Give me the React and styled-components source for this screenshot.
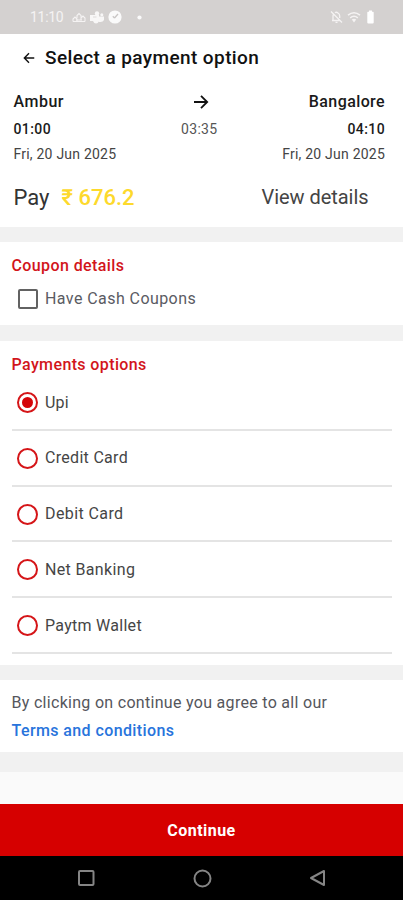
import React from "react";
import styled, { createGlobalStyle } from "styled-components";

const GlobalStyle = createGlobalStyle`
  *, *::before, *::after { box-sizing: border-box; }
  body { margin: 0; background: #fff; font-family: Roboto, sans-serif; }
  svg { display: block; flex: none; }
`;

const Screen = styled.div`
  width: 403px;
  height: 900px;
  display: flex;
  flex-direction: column;
  overflow: hidden;
  background: #fafafa;
`;

const StatusBar = styled.header`
  height: 34px;
  flex: none;
  display: flex;
  align-items: center;
  padding: 0 28px 0 30px;
  background: #d4d1d0;
  color: #f8f7f7;
`;

const StatusIcons = styled.div`
  display: flex;
  align-items: center;
  gap: ${(p) => p.$gap}px;
  margin-left: ${(p) => p.$left || "0"};
`;

const Label = styled.span`
  display: block;
  white-space: nowrap;
  font-size: ${(p) => p.$size || 16}px;
  line-height: ${(p) => p.$line || 24}px;
  font-weight: ${(p) => p.$weight || 400};
  letter-spacing: ${(p) => p.$track || 0}px;
  color: ${(p) => p.$color || "#222"};
`;

const TitleBar = styled.div`
  height: 48px;
  flex: none;
  display: flex;
  align-items: center;
  gap: 10px;
  padding-left: 23px;
  background: #fff;
`;

const Trip = styled.section`
  height: 145px;
  flex: none;
  padding: 6px 18px 0 13.5px;
  background: #fff;
`;

const TripRow = styled.div`
  height: ${(p) => p.$height}px;
  display: grid;
  grid-template-columns: 1fr 38px 1fr;
  align-items: center;
  justify-items: center;
  & > :first-child { justify-self: start; }
  & > :last-child { justify-self: end; }
  & > svg { margin-left: 4px; }
`;

const PayRow = styled.div`
  display: flex;
  align-items: center;
  height: 30px;
  margin-top: 18px;
  padding-right: 16.5px;
`;

const Amount = styled(Label)`
  margin-left: 12px;
  margin-right: auto;
`;

const DetailsLink = styled(Label)`
  margin-top: -2px;
`;

const Band = styled.div`
  height: ${(p) => p.$height}px;
  flex: none;
  background: #f1f1f1;
`;

const Section = styled.section`
  height: ${(p) => p.$height}px;
  flex: none;
  padding: ${(p) => p.$top}px 11px 0 11.5px;
  background: #fff;
`;

const CheckRow = styled.label`
  display: flex;
  align-items: center;
  gap: 7px;
  height: 24px;
  margin-top: 9px;
  padding-left: 6.5px;
`;

const Checkbox = styled.span`
  width: 20px;
  height: 20px;
  border: 2px solid #626262;
  border-radius: 2px;
`;

const Options = styled.div`
  margin-top: -2px;
`;

const Option = styled.label`
  display: flex;
  align-items: center;
  gap: 7px;
  height: 55.8px;
  padding: 1.3px 0 0 5.5px;
  border-bottom: 2px solid #e4e4e4;
`;

const Radio = styled.span`
  width: 21px;
  height: 21px;
  display: grid;
  place-items: center;
  border: 2px solid #d51518;
  border-radius: 50%;
  &::after {
    content: "";
    width: 11px;
    height: 11px;
    border-radius: 50%;
    background: ${(p) => (p.$checked ? "#d50509" : "transparent")};
  }
`;

const ContinueButton = styled.button`
  height: 52px;
  flex: none;
  margin-top: auto;
  padding: 2px 0 0;
  border: 0;
  display: grid;
  place-items: center;
  background: #d60000;
  font-family: inherit;
`;

const NavBar = styled.nav`
  height: 44px;
  flex: none;
  display: flex;
  align-items: center;
  justify-content: space-between;
  padding: 0 76px 0 77px;
  background: #000;
`;

function Arrow({ size, back, weight }) {
  return (
    <svg width={size} height={size} viewBox="0 0 16 16" fill="none" stroke="#111" strokeWidth={weight}>
      <path d={back ? "M15 8H2M8 1.8L1.8 8L8 14.2" : "M1 8H14M8 1.8L14.2 8L8 14.2"} />
    </svg>
  );
}

const methods = [
  ["Upi", 0.2],
  ["Credit Card", 0.3],
  ["Debit Card", 0.4],
  ["Net Banking", 0.35],
  ["Paytm Wallet", 0.28],
];

export default function App() {
  return (
    <>
      <GlobalStyle />
      <Screen>
        <StatusBar>
          <Label $size={14} $color="#f5f3f3" $track={-0.3}>11:10</Label>
          <StatusIcons $left="9px" $gap={4}>
            <svg width="14" height="12" viewBox="0 0 14 12" fill="none" stroke="#f5f3f3" strokeWidth="1.1">
              <path d="M1 10.5V8l2-2 2 2v2.5M5 7V4.5L7 2.5l2 2v5M9 7l2-2 2 2v3.5M1 10.5h12M4 9h6" />
            </svg>
            <svg width="14" height="13" viewBox="0 0 14 13" fill="#f8f7f7">
              <circle cx="7" cy="2.5" r="2.2" />
              <circle cx="11.8" cy="3.7" r="1.5" />
              <path d="M0 4h9v6H0zM8.8 5.5H14V9q-1 2-3.5 2H8.8zM3 10h6q-1 2.5-3 2.5T3 10z" />
              <path d="M3 6h3.5" stroke="#dedbda" />
            </svg>
            <svg width="14" height="14" viewBox="0 0 14 14">
              <circle cx="7" cy="7" r="6.6" fill="#fafafa" />
              <path d="M6.5 8L10 4M6.5 8L4.8 6.3" fill="none" stroke="#c9c6c5" strokeWidth="1.3" />
            </svg>
          </StatusIcons>
          <StatusIcons $left="15px">
            <svg width="5" height="5" viewBox="0 0 5 5"><circle cx="2.5" cy="2.5" r="2.1" fill="#fafafa" /></svg>
          </StatusIcons>
          <StatusIcons $left="auto" $gap={4}>
            <svg width="13" height="14" viewBox="0 0 13 14" fill="none" stroke="#f5f3f3" strokeWidth="1.3">
              <path d="M1 1.5L12 12.5M2 10.5h8M3 10V6q0-1 .8-2M5 2.8Q6.3 1.5 8 3q1.7 1 1.7 3v2M5.5 12.3h2" />
            </svg>
            <svg width="14" height="13" viewBox="0 0 14 13" fill="none" stroke="#f5f3f3" strokeWidth="1.5">
              <path d="M1 4.2q6-5 12 0M3.2 6.8q3.8-3 7.6 0" />
              <path d="M4.8 8.4q2.2-1.4 4.4 0L7 11.5z" fill="#f5f3f3" stroke="none" />
            </svg>
            <svg width="10" height="14" viewBox="0 0 10 14" fill="#fff">
              <path d="M4 0.5h3v1.2h1q.7 0 .7.8v10q0 1-1 1H3.3q-1 0-1-1v-10q0-.8.7-.8h1z" />
            </svg>
          </StatusIcons>
        </StatusBar>

        <TitleBar>
          <Arrow size={12} back weight={1.9} />
          <Label $size={19} $weight={500} $track={0.4} $color="#111">Select a payment option</Label>
        </TitleBar>

        <Trip>
          <TripRow $height={27}>
            <Label $weight={500} $track={0.5} $color="#1a1a1a">Ambur</Label>
            <Arrow size={16} weight={1.8} />
            <Label $weight={500} $track={0.4} $color="#1a1a1a">Bangalore</Label>
          </TripRow>
          <TripRow $height={27}>
            <Label $size={14} $weight={500} $track={0.4} $color="#1a1a1a">01:00</Label>
            <Label $size={14} $track={0.3} $color="#555">03:35</Label>
            <Label $size={14} $weight={500} $track={0.4} $color="#1a1a1a">04:10</Label>
          </TripRow>
          <TripRow $height={23}>
            <Label $size={14} $track={0.22} $color="#444">Fri, 20 Jun 2025</Label>
            <span />
            <Label $size={14} $track={0.22} $color="#444">Fri, 20 Jun 2025</Label>
          </TripRow>
          <PayRow>
            <Label $size={22} $color="#333">Pay</Label>
            <Amount $size={22} $weight={500} $color="#fdd92c">₹ 676.2</Amount>
            <DetailsLink $size={20} $track={-0.05} $color="#444">View details</DetailsLink>
          </PayRow>
        </Trip>

        <Band $height={15} />
        <Section $height={83} $top={12}>
          <Label $weight={500} $track={0.4} $color="#d2151b">Coupon details</Label>
          <CheckRow>
            <Checkbox />
            <Label $track={0.43} $color="#5a5b63">Have Cash Coupons</Label>
          </CheckRow>
        </Section>

        <Band $height={16} />
        <Section $height={324} $top={12}>
          <Label $weight={500} $track={0.38} $color="#d2151b">Payments options</Label>
          <Options>
            {methods.map(([name, track], i) => (
              <Option key={name}>
                <Radio $checked={i === 0} />
                <Label $color="#454545" $track={track}>{name}</Label>
              </Option>
            ))}
          </Options>
        </Section>

        <Band $height={15} />
        <Section $height={72} $top={11}>
          <Label $track={0.3} $color="#55565c">By clicking on continue you agree to all our</Label>
          <Label $weight={500} $track={0.4} $line={31} $color="#2874dc">Terms and conditions</Label>
        </Section>
        <Band $height={20} />

        <ContinueButton type="button">
          <Label $weight={700} $track={0.45} $color="#fff">Continue</Label>
        </ContinueButton>
        <NavBar>
          <svg width="18" height="18" viewBox="0 0 18 18" fill="none" stroke="#858585" strokeWidth="2">
            <rect x="2" y="2" width="14.5" height="14" rx="1" />
          </svg>
          <svg width="19" height="19" viewBox="0 0 19 19" fill="none" stroke="#858585" strokeWidth="2">
            <circle cx="9.5" cy="9.5" r="8" />
          </svg>
          <svg width="18" height="18" viewBox="0 0 18 18" fill="none" stroke="#858585" strokeWidth="2" strokeLinejoin="round">
            <path d="M2 9L15 2V16Z" />
          </svg>
        </NavBar>
      </Screen>
    </>
  );
}
